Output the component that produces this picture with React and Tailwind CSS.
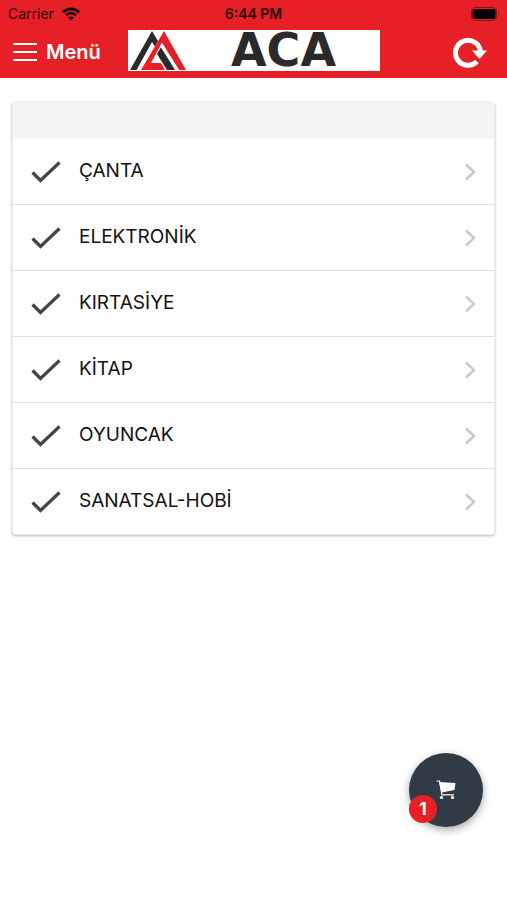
const categories = ['ÇANTA', 'ELEKTRONİK', 'KIRTASİYE', 'KİTAP', 'OYUNCAK', 'SANATSAL-HOBİ']

const StatusBar = () => (
  <div className="grid grid-cols-3 items-center h-7 px-2 text-sm text-[#2a0506]">
    <div className="flex items-center gap-2">
      <span>Carrier</span>
      <svg className="w-[18px] h-[14px]" viewBox="0 0 18 14" fill="none" stroke="#140203" strokeWidth="2.6">
        <path d="M1 5.2C5.6 .8 12.4 .8 17 5.2" />
        <path d="M4 8.3c2.9-2.7 7.1-2.7 10 0" />
        <path d="M9 13.6 6 10.6c1.8-1.5 4.2-1.5 6 0z" fill="#140203" stroke="none" />
      </svg>
    </div>
    <span className="text-center font-semibold">6:44 PM</span>
    <svg className="w-7 h-[14px] justify-self-end" viewBox="0 0 28 14">
      <rect x="0.5" y="0.5" width="25" height="13" rx="3.5" fill="none" stroke="#8c1417" />
      <rect x="1.5" y="2" width="23" height="10" rx="2" fill="#000" />
      <path d="M27 5.2v3.6c.9-.4 1-1 1-1.8s-.1-1.4-1-1.8z" fill="#8c1417" />
    </svg>
  </div>
)

const Logo = () => (
  <div className="flex items-center w-[252px] h-[41px] bg-white">
    <svg className="w-[60px] h-[41px] shrink-0" viewBox="0 0 60 41">
      <path d="M2 40 24 1 30 11 27 16.5 24 12 8.5 40z" fill="#2a2a2a" />
      <path d="M29 24 33 17 47 40H39z" fill="#2a2a2a" />
      <path d="M13 40 36 1 58 40H51L34 13 30 20 23 33H33L37 40z" fill="#e72027" />
      <path d="M34 13 51 40H48L32 16z" fill="#fff" />
    </svg>
    <span className="flex-1 text-center text-[46px] leading-none font-bold text-[#2a2a2a] font-['DejaVu_Sans',sans-serif]">
      ACA
    </span>
  </div>
)

const Header = () => (
  <header className="bg-[#e72027] h-[78px]">
    <StatusBar />
    <div className="grid grid-cols-[1fr_auto_1fr] items-center h-11 px-3">
      <button className="flex items-center gap-2 h-11 pt-1 text-white text-xl font-semibold">
        <svg className="w-[26px] h-[18px]" viewBox="0 0 26 18" stroke="#fff" strokeWidth="2">
          <path d="M1 1h24M1 9h24M1 17h24" />
        </svg>
        Menü
      </button>
      <Logo />
      <button aria-label="Yenile" className="justify-self-end pt-1 pr-2">
        <svg className="w-[34px] h-8" viewBox="0 0 34 32">
          <path d="M24 25.500A12.500 12.500 0 1 1 27.500 16" fill="none" stroke="#fff" strokeWidth="5" />
          <path d="M19 14.500H34L26.500 23z" fill="#fff" />
        </svg>
      </button>
    </div>
  </header>
)

const CategoryRow = ({ name }) => (
  <li className="border-b border-[#dedede] last:border-b-0">
    <a href="#" className="flex items-center h-[65px] px-[18px] text-[19px] text-[#111]">
      <svg className="w-[30px] h-[22px] mr-[18px]" viewBox="0 0 30 22" fill="none" stroke="#444" strokeWidth="3.2">
        <path d="M1.5 11.5 9.5 19.5 28.5 1.5" />
      </svg>
      <span className="flex-1">{name}</span>
      <svg className="w-3 h-[18px]" viewBox="0 0 12 18" fill="none" stroke="#c7c7cc" strokeWidth="2.4">
        <path d="M2 1.5 10 9 2 16.5" />
      </svg>
    </a>
  </li>
)

const CartButton = ({ count }) => (
  <button
    aria-label="Sepet"
    className="fixed right-6 bottom-[73px] flex items-center justify-center w-[74px] h-[74px] rounded-full bg-[#303b46] shadow-[0_3px_8px_rgba(0,0,0,0.35)]"
  >
    <svg className="w-5 h-5" viewBox="0 0 20 20">
      <path d="M3 2 19.5 3 18.5 10 5.5 12.5z" fill="#fff" />
      <path d="M.5 1H3.5L6 14.8H18" fill="none" stroke="#fff" strokeWidth="1.2" />
      <circle cx="5.5" cy="17.5" r="1.6" fill="#fff" />
      <circle cx="16.5" cy="17.5" r="1.6" fill="#fff" />
    </svg>
    <span className="absolute left-0 bottom-1 flex items-center justify-center w-7 h-7 rounded-full bg-[#e72027] text-white text-lg font-bold">
      {count}
    </span>
  </button>
)

export default function App() {
  return (
    <div className="min-h-screen bg-white font-['Inter',sans-serif]">
      <Header />
      <main className="px-3 pt-6">
        <div className="rounded-sm overflow-hidden border border-[#ececec] shadow-[0_1px_3px_rgba(0,0,0,0.3)]">
          <div className="h-9 bg-[#f5f5f5]" />
          <ul>
            {categories.map((name) => (
              <CategoryRow key={name} name={name} />
            ))}
          </ul>
        </div>
      </main>
      <CartButton count={1} />
    </div>
  )
}
